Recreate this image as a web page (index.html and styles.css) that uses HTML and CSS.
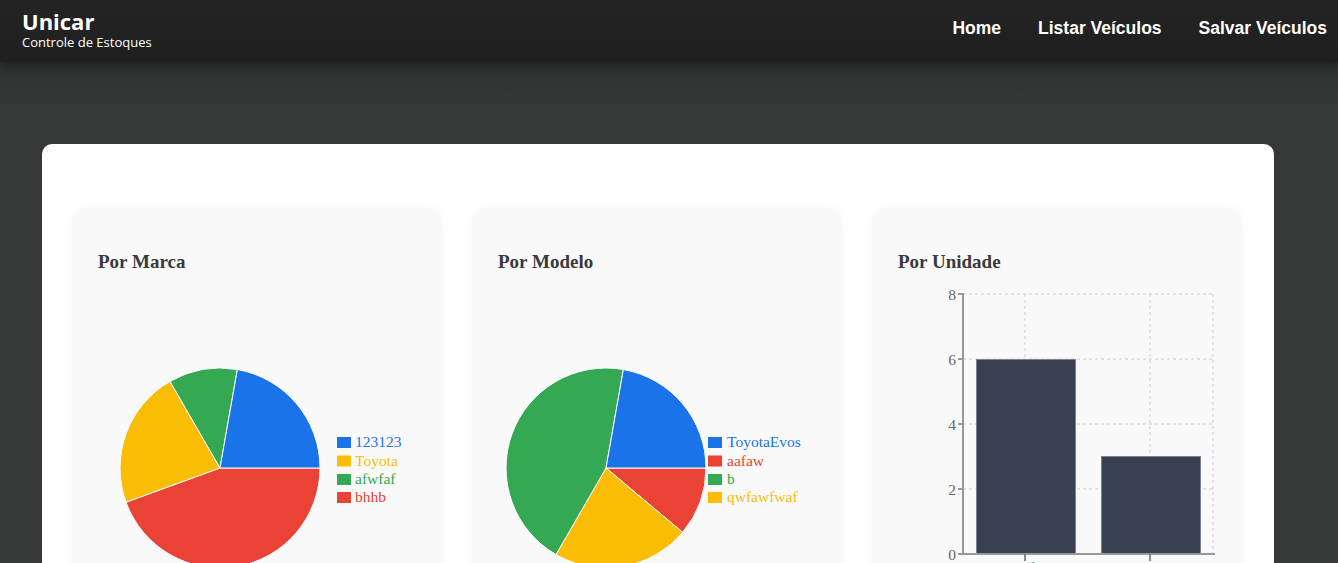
FILE: index.html
```html
<!DOCTYPE html>
<html lang="pt-BR">
<head>
<meta charset="utf-8">
<title>Unicar</title>
<link rel="stylesheet" href="styles.css">
</head>
<body>
<header class="topbar">
  <div class="brand">
    <div class="brand-name">Unicar</div>
    <div class="brand-sub">Controle de Estoques</div>
  </div>
  <nav class="nav">
    <a href="#" class="nav-link">Home</a>
    <a href="#" class="nav-link">Listar Veículos</a>
    <a href="#" class="nav-link">Salvar Veículos</a>
  </nav>
</header>
<main class="main">
  <section class="panel">
    <div class="grid">
      <div class="chart-card">
        <h3 class="chart-title">Por Marca</h3>
        <svg class="chart" width="318" height="300" viewBox="0 0 318 300">
          <g stroke="#ffffff" stroke-width="1">
            <path fill="#ea4335" d="M122,186 L222,186 A100,100 0 0 1 28.03,220.2 Z"/>
            <path fill="#fbbc04" d="M122,186 L28.03,220.2 A100,100 0 0 1 72,99.4 Z"/>
            <path fill="#34a853" d="M122,186 L72,99.4 A100,100 0 0 1 139.36,87.52 Z"/>
            <path fill="#1a73e8" d="M122,186 L139.36,87.52 A100,100 0 0 1 222,186 Z"/>
          </g>
          <g class="legend">
            <rect x="239" y="155" width="14" height="11" fill="#1a73e8"/>
            <text x="257" y="165" fill="#1a73e8">123123</text>
            <rect x="239" y="173.5" width="14" height="11" fill="#fbbc04"/>
            <text x="257" y="183.5" fill="#fbbc04">Toyota</text>
            <rect x="239" y="192" width="14" height="11" fill="#34a853"/>
            <text x="257" y="202" fill="#34a853">afwfaf</text>
            <rect x="239" y="210" width="14" height="11" fill="#ea4335"/>
            <text x="257" y="220" fill="#ea4335">bhhb</text>
          </g>
        </svg>
      </div>
      <div class="chart-card">
        <h3 class="chart-title">Por Modelo</h3>
        <svg class="chart" width="318" height="300" viewBox="0 0 318 300">
          <g stroke="#ffffff" stroke-width="1">
            <path fill="#ea4335" d="M108,186 L208,186 A100,100 0 0 1 184.6,250.28 Z"/>
            <path fill="#fbbc04" d="M108,186 L184.6,250.28 A100,100 0 0 1 58,272.6 Z"/>
            <path fill="#34a853" d="M108,186 L58,272.6 A100,100 0 0 1 125.36,87.52 Z"/>
            <path fill="#1a73e8" d="M108,186 L125.36,87.52 A100,100 0 0 1 208,186 Z"/>
          </g>
          <g class="legend">
            <rect x="210" y="155" width="14" height="11" fill="#1a73e8"/>
            <text x="229" y="165" fill="#1a73e8">ToyotaEvos</text>
            <rect x="210" y="173.5" width="14" height="11" fill="#ea4335"/>
            <text x="229" y="183.5" fill="#ea4335">aafaw</text>
            <rect x="210" y="192" width="14" height="11" fill="#34a853"/>
            <text x="229" y="202" fill="#34a853">b</text>
            <rect x="210" y="210" width="14" height="11" fill="#fbbc04"/>
            <text x="229" y="220" fill="#fbbc04">qwfawfwaf</text>
          </g>
        </svg>
      </div>
      <div class="chart-card">
        <h3 class="chart-title">Por Unidade</h3>
        <svg class="chart" width="318" height="300" viewBox="0 0 318 300">
          <g stroke="#cccccc" stroke-width="1" stroke-dasharray="3,3" fill="none">
            <line x1="65" y1="12" x2="315" y2="12"/>
            <line x1="65" y1="77" x2="315" y2="77"/>
            <line x1="65" y1="142" x2="315" y2="142"/>
            <line x1="65" y1="207" x2="315" y2="207"/>
            <line x1="127" y1="12" x2="127" y2="272"/>
            <line x1="252" y1="12" x2="252" y2="272"/>
            <line x1="315" y1="12" x2="315" y2="272"/>
          </g>
          <rect x="78.5" y="77.5" width="99" height="194.5" fill="#374151" stroke="#7b8391" stroke-width="1"/>
          <rect x="203.5" y="174.5" width="99" height="97.5" fill="#374151" stroke="#7b8391" stroke-width="1"/>
          <g stroke="#999999" stroke-width="2">
            <line x1="65" y1="11" x2="65" y2="273"/>
            <line x1="64" y1="272" x2="317" y2="272"/>
            <line x1="60" y1="12" x2="65" y2="12"/>
            <line x1="60" y1="77" x2="65" y2="77"/>
            <line x1="60" y1="142" x2="65" y2="142"/>
            <line x1="60" y1="207" x2="65" y2="207"/>
            <line x1="60" y1="272" x2="65" y2="272"/>
          </g>
          <g stroke="#666666" stroke-width="1.5">
            <line x1="127" y1="272" x2="127" y2="279"/>
            <line x1="252" y1="272" x2="252" y2="279"/>
          </g>
          <g class="axis-label" text-anchor="end">
            <text x="58" y="18">8</text>
            <text x="58" y="83">6</text>
            <text x="58" y="148">4</text>
            <text x="58" y="213">2</text>
            <text x="58" y="278">0</text>
          </g>
          <g class="axis-label" text-anchor="middle">
            <text x="127" y="291">Fora Oficina</text>
            <text x="252" y="291">Fabrica de Somal</text>
          </g>
        </svg>
      </div>
    </div>
  </section>
</main>
</body>
</html>
```

FILE: styles.css
```css
* { box-sizing: border-box; }

html, body {
  margin: 0;
  padding: 0;
  height: 100%;
  overflow: hidden;
}

body {
  background: #363837;
  font-family: "Liberation Serif", serif;
}

.topbar {
  height: 62px;
  display: flex;
  align-items: center;
  justify-content: space-between;
  padding: 0 11px 0 22px;
  background: linear-gradient(180deg, #242424 0%, #1f1f1f 100%);
  box-shadow: 0 2px 8px rgba(0, 0, 0, 0.45);
  position: relative;
  z-index: 2;
  color: #ffffff;
}

.brand {
  display: flex;
  flex-direction: column;
  margin-top: -3px;
}

.brand-name {
  font-family: "Open Sans", sans-serif;
  font-weight: 700;
  font-size: 22px;
  line-height: 24px;
}

.brand-sub {
  font-family: "Open Sans", sans-serif;
  font-size: 13px;
  line-height: 16px;
  margin-top: 1px;
}

.nav {
  display: flex;
  gap: 37px;
  margin-top: -5px;
}

.nav-link {
  font-family: "Liberation Sans", Arial, sans-serif;
  font-weight: 700;
  font-size: 17.5px;
  color: #ffffff;
  text-decoration: none;
}

.main {
  padding: 82px 64px 0 42px;
  background: linear-gradient(180deg, #2e2f2f 0px, #363837 40px, #363837 100%);
  height: calc(100% - 62px);
}

.panel {
  background: #ffffff;
  border-radius: 10px;
  padding: 64px 32px 40px 30px;
  min-height: 600px;
}

.grid {
  display: grid;
  grid-template-columns: repeat(3, 370px);
  gap: 30px;
}

.chart-card {
  background: #f9f9f9;
  border-radius: 16px;
  box-shadow: 0 0 12px rgba(0, 0, 0, 0.035);
  padding: 44px 26px 40px;
  min-height: 420px;
}

.chart-title {
  margin: 0 0 10px;
  font-family: "Liberation Serif", serif;
  font-weight: 700;
  font-size: 19px;
  line-height: 20px;
  color: #3a3a3a;
}

.chart {
  display: block;
}

.legend text {
  font-family: "Liberation Serif", serif;
  font-size: 15.5px;
}

.axis-label text {
  font-family: "Liberation Serif", serif;
  font-size: 15.5px;
  fill: #666666;
}
```
